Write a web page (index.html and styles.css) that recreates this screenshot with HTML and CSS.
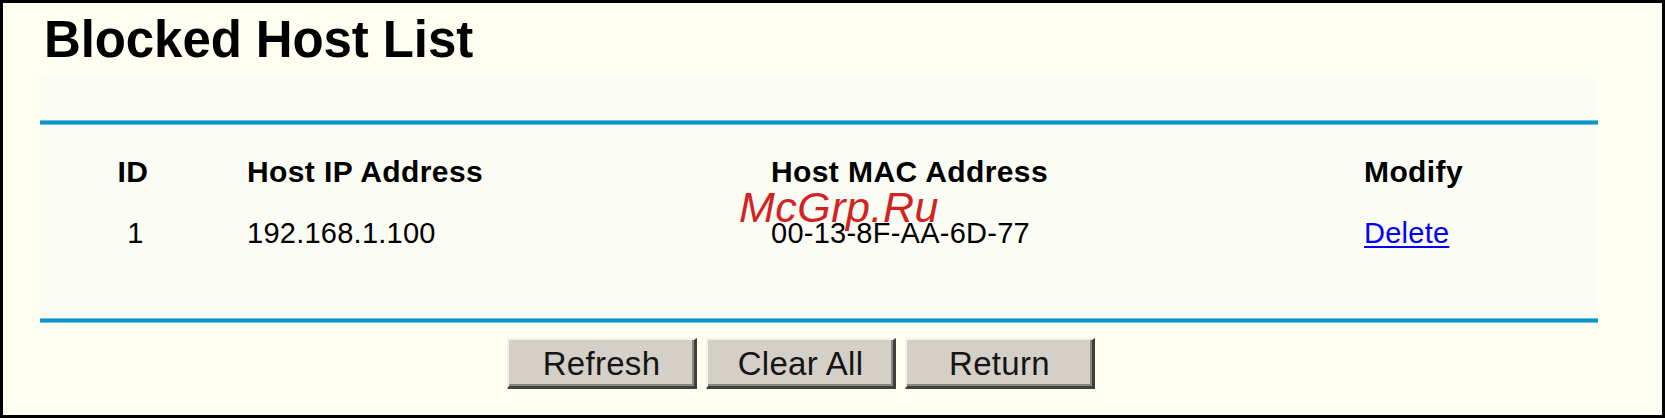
FILE: index.html
```html
<!DOCTYPE html>
<html lang="en">
<head>
<meta charset="utf-8">
<title>Blocked Host List</title>
<link rel="stylesheet" href="styles.css">
</head>
<body>
<div class="frame">
  <h1 class="title">Blocked Host List</h1>
  <div class="panel">
    <div class="spacer"></div>
    <div class="rule"></div>
    <div class="grid">
      <div class="cell head center">ID</div>
      <div class="cell head">Host IP Address</div>
      <div class="cell head">Host MAC Address</div>
      <div class="cell head">Modify</div>
      <div class="cell data center idnum">1</div>
      <div class="cell data">192.168.1.100</div>
      <div class="cell data">00-13-8F-AA-6D-77</div>
      <div class="cell data"><a class="link" href="#">Delete</a></div>
    </div>
    <div class="rule"></div>
  </div>
  <div class="actions">
    <button class="btn" type="button">Refresh</button>
    <button class="btn" type="button">Clear All</button>
    <button class="btn" type="button">Return</button>
  </div>
  <div class="watermark">McGrp.Ru</div>
</div>
</body>
</html>
```
FILE: styles.css
```css
* { box-sizing: border-box; }

html, body {
  margin: 0;
  padding: 0;
  background: #000;
}

.frame {
  position: relative;
  width: 1665px;
  height: 418px;
  border: 3px solid #000;
  background: #FEFEF1;
  font-family: "Liberation Sans", Arial, sans-serif;
  color: #000;
  overflow: hidden;
}

.title {
  margin: 0;
  padding: 7px 0 0 41px;
  font-size: 51px;
  line-height: 60px;
  font-weight: bold;
  letter-spacing: -0.1px;
}

.panel {
  margin: 8px 0 0 37px;
  width: 1558px;
  background: #FBFCF4;
}

.spacer { height: 42px; }

.rule {
  height: 5px;
  background: #0996C9;
  border-top: 1px solid #6DBFE0;
  border-bottom: 1px solid #6DBFE0;
}

.grid {
  display: grid;
  grid-template-columns: 186px 524px 593px 1fr;
  grid-template-rows: 62px 60px;
  padding: 16px 0 55px 0;
}

.cell {
  display: flex;
  align-items: center;
  padding-left: 21px;
  white-space: nowrap;
}

.cell.center {
  justify-content: center;
  padding-left: 0;
}

.cell.idnum {
  padding-left: 5px;
}

.head {
  font-size: 30px;
  font-weight: bold;
  letter-spacing: 0.4px;
}

.data {
  font-size: 29px;
  letter-spacing: 0.25px;
}

.link {
  color: #0000FF;
  text-decoration: underline;
  text-decoration-thickness: 2px;
  text-underline-offset: 3px;
}

.actions {
  display: flex;
  gap: 9px;
  margin-top: 15px;
  padding-left: 504px;
}

.btn {
  width: 190px;
  height: 51px;
  margin: 0;
  padding: 0;
  background: #D4D0C8;
  border-style: solid;
  border-width: 2px 3px 3px 2px;
  border-color: #F4F2EE #404040 #404040 #F4F2EE;
  box-shadow: inset -2px -2px 0 #8A8780;
  font-family: "Liberation Sans", Arial, sans-serif;
  font-size: 33px;
  letter-spacing: 0.3px;
  color: #151515;
  line-height: 1;
}

.watermark {
  position: absolute;
  left: 736px;
  top: 183px;
  font-family: "Liberation Sans", Arial, sans-serif;
  font-style: italic;
  font-size: 43px;
  line-height: 43px;
  letter-spacing: 0.5px;
  color: #D42222;
  white-space: nowrap;
}
```
